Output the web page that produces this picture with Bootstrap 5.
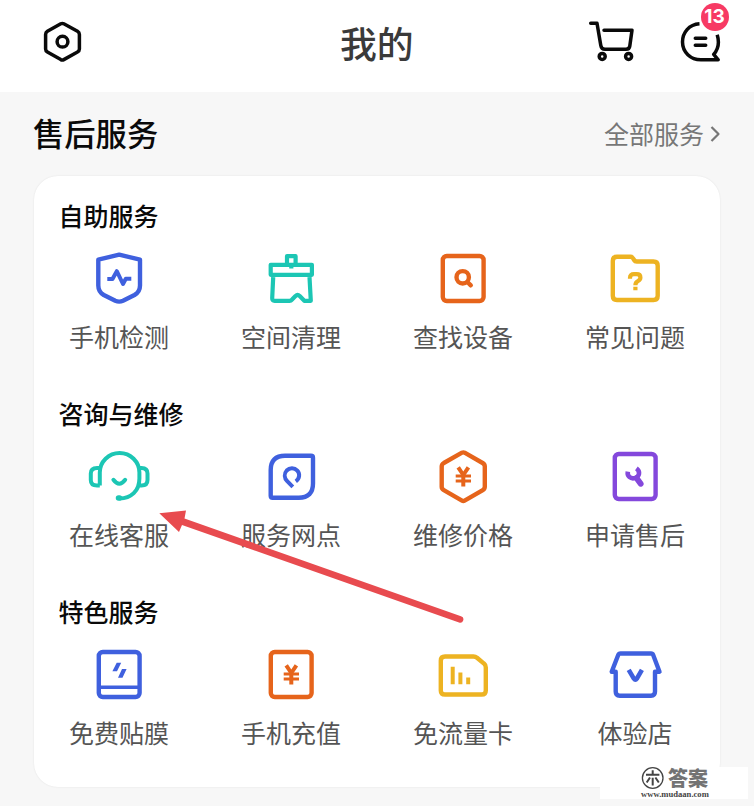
<!DOCTYPE html>
<html lang="zh-CN">
<head>
<meta charset="utf-8">
<meta name="viewport" content="width=device-width, initial-scale=1">
<title>我的</title>
<link rel="stylesheet" href="https://cdn.jsdelivr.net/npm/bootstrap@5.3.0/dist/css/bootstrap.min.css">
<style>
body{background:#f7f7f7;font-family:"Noto Sans CJK SC","Liberation Sans",sans-serif;width:754px;height:806px;overflow:hidden}
svg{display:block;fill:none;stroke:currentColor;stroke-linejoin:round;flex:none}
.topbar{height:92px;padding:0 30px 8px 42px;color:#0a0a0a}
.topbar h1{font-size:36.8px;line-height:50px;color:#3a3a3a;font-weight:500;margin:0 0 1px 257px}
.actions{margin-left:174px;gap:44px}
.msg-count{position:absolute;left:21px;top:-17px;width:28px;height:28px;background:#f73a64;color:#fff;font:bold 19px/28px "Inter","Liberation Sans",sans-serif}
.service-head{height:84px;padding:0 33px 3px 33px}
.service-head h2{font-size:31.3px;line-height:44px;color:#0a0a0a;font-weight:500}
.all-link{font-size:25px;line-height:36px;color:#777;gap:5px;padding-top:1px}
.all-link svg{margin-top:2px}
.service-card{margin:0 34px;height:611px;border-radius:24px;box-shadow:0 0 2px rgba(0,0,0,.09)}
.service-group{height:198px;padding-top:19px}
.service-group h3{font-size:25px;line-height:40px;font-weight:500;color:#0a0a0a;margin:0 0 11px 24.5px}
.tiles{margin:0 -1px}
.tile svg{width:64px;height:64px;stroke-width:4.4}
.tile span{font-size:25px;line-height:36px;margin-top:8px;color:#555}
.c-blue{color:#3f60de}.c-teal{color:#1cc6b4}.c-orange{color:#e6641b}.c-yellow{color:#edb322}.c-purple{color:#8448dc}
.pointer{position:absolute;left:150px;top:500px}
.stamp{position:absolute;left:600px;top:767px;width:148px;height:32px;color:#444}
.stamp-name{font-size:20px;line-height:22px;font-weight:900;color:#737373}
.stamp-url{font:bold 8.6px/9px "Liberation Serif",serif;color:#444;padding-left:41px;padding-top:1px}
</style>
<script src="https://cdn.jsdelivr.net/npm/bootstrap@5.3.0/dist/js/bootstrap.bundle.min.js"></script>
</head>
<body class="position-relative">
<svg width="0" height="0" class="position-absolute"><defs>
<g id="yuan" stroke-width="4"><path d="M-4.8-8.6L.3-1L5.4-8.6M.3-1V10.5"/><path stroke-width="3.2" d="M-7.3 0H8M-7.3 5H8"/></g>
<rect id="sheet" x="-20.2" y="-22" width="40.8" height="45" rx="4"/>
</defs></svg>

<header class="topbar bg-white d-flex align-items-center">
  <svg width="41" height="44" viewBox="42 20 41 44" stroke-width="3.5"><path d="M60.8 23.8Q62.3 23 63.8 23.8L77.5 31.3Q79.4 32.4 79.4 34.5V49Q79.4 51 77.5 52L63.8 59.6Q62.3 60.4 60.8 59.6L47.4 52Q45.6 51 45.6 49V34.5Q45.6 32.4 47.4 31.3Z"/><circle cx="62.5" cy="41.7" r="5.4"/></svg>
  <h1>我的</h1>
  <div class="actions d-flex align-items-center">
    <svg width="48" height="44" viewBox="588 20 48 44" stroke-width="3.5"><path stroke-linecap="round" d="M590.7 23.3H597L600.8 45.5Q601.4 49.3 605 49.3H626Q629.4 49.3 629.8 46L632 30.2H604"/><circle cx="602.2" cy="56.4" r="3"/><circle cx="628.6" cy="56.4" r="3"/></svg>
    <div class="position-relative">
      <svg width="42" height="44" viewBox="680 20 42 44" stroke-width="3.5"><path d="M699.5 23.8C689 24.5 682.5 32.5 682.5 42C682.5 52 690.5 59.8 701 59.8H718.2L713.7 54.3C718 49.5 719.7 43 717.2 34.8"/><path stroke-linecap="round" d="M695.3 38.3H705.7M695.3 45.2H705.7"/></svg>
      <span class="msg-count rounded-circle text-center">13</span>
    </div>
  </div>
</header>

<main>
  <div class="service-head d-flex align-items-center justify-content-between">
    <h2 class="m-0">售后服务</h2>
    <a class="all-link d-flex align-items-center text-decoration-none"><span>全部服务</span><svg width="12" height="18" viewBox="0 0 12 18" stroke-width="2.2"><path d="M2.5 2L9.5 9L2.5 16"/></svg></a>
  </div>
  <div class="service-card bg-white">
    <section class="service-group">
      <h3>自助服务</h3>
      <div class="tiles row g-0">
        <div class="tile col-3 d-flex flex-column align-items-center"><svg class="c-blue" viewBox="-32 -32 64 64"><path d="M.2-23.3L21-18.3V7.5Q21 13.8 15.5 17L4 22.8Q.2 24.5-3.7 22.8L-15.2 17Q-20.7 13.8-20.7 7.5V-18.3Z"/><path stroke-width="4" d="M-11.7 1H-6.5L-2.2-6.8L4 6L6.8.7H12.3"/></svg><span>手机检测</span></div>
        <div class="tile col-3 d-flex flex-column align-items-center"><svg class="c-teal" viewBox="-32 -32 64 64"><path stroke-width="4.2" d="M-20.3-13.2H20.9V-3.2H-20.3ZM-4-13V-21.8H4.6V-13M.3-13V-9.5M-17.8-.9L-18.8 20Q-18.9 22.8-16.4 22.8H-1.5Q0 22.8 1.3 21.3L4.5 18Q6.6 16 8.7 18L13.3 22.8H19.8L18.5-.9"/></svg><span>空间清理</span></div>
        <div class="tile col-3 d-flex flex-column align-items-center"><svg class="c-orange" viewBox="-32 -32 64 64"><use href="#sheet"/><circle cx="-.3" cy="-.7" r="6.2"/><path stroke-linecap="round" d="M4.4 4L7.8 7.3"/></svg><span>查找设备</span></div>
        <div class="tile col-3 d-flex flex-column align-items-center"><svg class="c-yellow" viewBox="-32 -32 64 64"><path d="M-18-21.2H-4.5Q-2.8-21.2-1.8-19.5L-.9-18Q0-16.5 1.7-16.5H18.5Q22.7-16.5 22.7-12.3V17.8Q22.7 22 18.5 22H-18Q-22.2 22-22.2 17.8V-17Q-22.2-21.2-18-21.2Z"/><path stroke-width="4.2" d="M-5 .7V-.3Q-5-3.8-1-3.8H1.6Q5.4-3.8 5.4-.5Q5.4 1.7 3.2 2.8Q.4 4.2.4 7.3M.4 8.8V12.2"/></svg><span>常见问题</span></div>
      </div>
    </section>
    <section class="service-group">
      <h3>咨询与维修</h3>
      <div class="tiles row g-0">
        <div class="tile col-3 d-flex flex-column align-items-center"><svg class="c-teal" viewBox="-32 -32 64 64"><path stroke-width="4" d="M-19.2 9.5V-3.5A19.8 19.5 0 0 1 20.4-3.5V2.5C20.4 15 12 22.5.5 22.5M-19.2-8H-22Q-28.2-8-28.2-2.5V4Q-28.2 9.5-22 9.5H-19.2M20.4-8H22.5Q28.5-8 28.5-2.5V4Q28.5 9.5 22.5 9.5H19.5"/><path stroke-width="4" stroke-linecap="round" d="M-5.6 3.8Q.3 11.6 6.2 3.8"/><path stroke-width="5.5" stroke-linecap="round" d="M-.5 22H.5"/></svg><span>在线客服</span></div>
        <div class="tile col-3 d-flex flex-column align-items-center"><svg class="c-blue" viewBox="-32 -32 64 64"><path d="M-6-20.2H20Q22-20.2 22-18.2V7.5Q22 21.7 7.8 21.7H-18.3Q-20.3 21.7-20.3 19.7V-6Q-20.3-20.2-6-20.2Z"/><path stroke-width="4" d="M4.8 5.3C8.8 2.5 9.1-2.4 6.3-5.4C3.4-8.4-1.4-8.4-4.3-5.5C-7.1-2.5-6.8 2-3.8 5.2L1.8 10.8"/></svg><span>服务网点</span></div>
        <div class="tile col-3 d-flex flex-column align-items-center"><svg class="c-orange" viewBox="-32 -32 64 64"><path d="M-1-23.3Q.3-24 1.6-23.3L19.6-13Q21.8-11.7 21.8-9.5V10.8Q21.8 13 19.8 14.2L1.6 24.6Q.3 25.4-1 24.6L-19.2 14.2Q-21.3 13-21.3 10.8V-9.5Q-21.3-11.7-19.2-13Z"/><use href="#yuan"/></svg><span>维修价格</span></div>
        <div class="tile col-3 d-flex flex-column align-items-center"><svg class="c-purple" viewBox="-32 -32 64 64"><use href="#sheet"/><path d="M-7.2-4.4C-8 .5-4.2 3.2-.2 2.1C4.6.8 5.6-4.6 1.4-7.6" stroke-width="4.6"/><path stroke-width="5.8" stroke-linecap="round" d="M1.5 2L5.7 7.8"/></svg><span>申请售后</span></div>
      </div>
    </section>
    <section class="service-group">
      <h3>特色服务</h3>
      <div class="tiles row g-0">
        <div class="tile col-3 d-flex flex-column align-items-center"><svg class="c-blue" viewBox="-32 -32 64 64"><use href="#sheet"/><path stroke-width="3.6" d="M-20 13.3H20"/><path fill="currentColor" stroke="none" d="M-2.3-11.3H2.2L-2-2.7H-6.6ZM3-5H7.6L3.5 3.7H-1Z"/></svg><span>免费贴膜</span></div>
        <div class="tile col-3 d-flex flex-column align-items-center"><svg class="c-orange" viewBox="-32 -32 64 64"><use href="#sheet"/><use href="#yuan"/></svg><span>手机充值</span></div>
        <div class="tile col-3 d-flex flex-column align-items-center"><svg class="c-yellow" viewBox="-32 -32 64 64"><path d="M-18-17.5H10.5Q12.5-17.5 14-16.3L21-10.4Q22.8-9 22.8-6.5V16.4Q22.8 20.5 18.6 20.5H-18Q-22.2 20.5-22.2 16.4V-13.3Q-22.2-17.5-18-17.5Z"/><path stroke-width="4" d="M-10.3-7.3V10.2M-2.6-1.6V10.2M5.2 3.4V10.2"/></svg><span>免流量卡</span></div>
        <div class="tile col-3 d-flex flex-column align-items-center"><svg class="c-blue" viewBox="-32 -32 64 64"><path d="M-14.5-20.5H16Q17.6-20.5 18.2-19L24.5-2.2H20V17.6Q20 21.8 16 21.8H-15.3Q-19.3 21.8-19.3 17.6V-2.2H-23.3L-16.8-19Q-16.2-20.5-14.5-20.5Z"/><path stroke-width="4.6" d="M-6.3-4.2L-1 4.8Q.4 6.8 1.7 4.8L6.9-4.2"/></svg><span>体验店</span></div>
      </div>
    </section>
  </div>
</main>

<svg class="pointer" width="320" height="130" viewBox="150 500 320 130"><path fill="#e84b4f" stroke="none" d="M159.3 513.3L186 510.6L184.5 518.6L461 616.2A3.3 3.3 0 0 1 459 622.6L182 524.9L179 532Z"/></svg>
<div class="stamp bg-white">
  <div class="d-flex align-items-center">
    <svg width="68" height="22" viewBox="600 768 68 22"><circle cx="652.7" cy="779" r="10.3" stroke-width="1.3"/><path stroke-width="2" d="M646 775.8H659.4M652.7 771.3V775.8M652.7 778.8V786.5M650 778.5L646.7 783.5M655.4 778.5L658.8 783.5"/></svg>
    <span class="stamp-name">答案</span>
  </div>
  <div class="stamp-url">www.mudaan.com</div>
</div>
</body>
</html>
